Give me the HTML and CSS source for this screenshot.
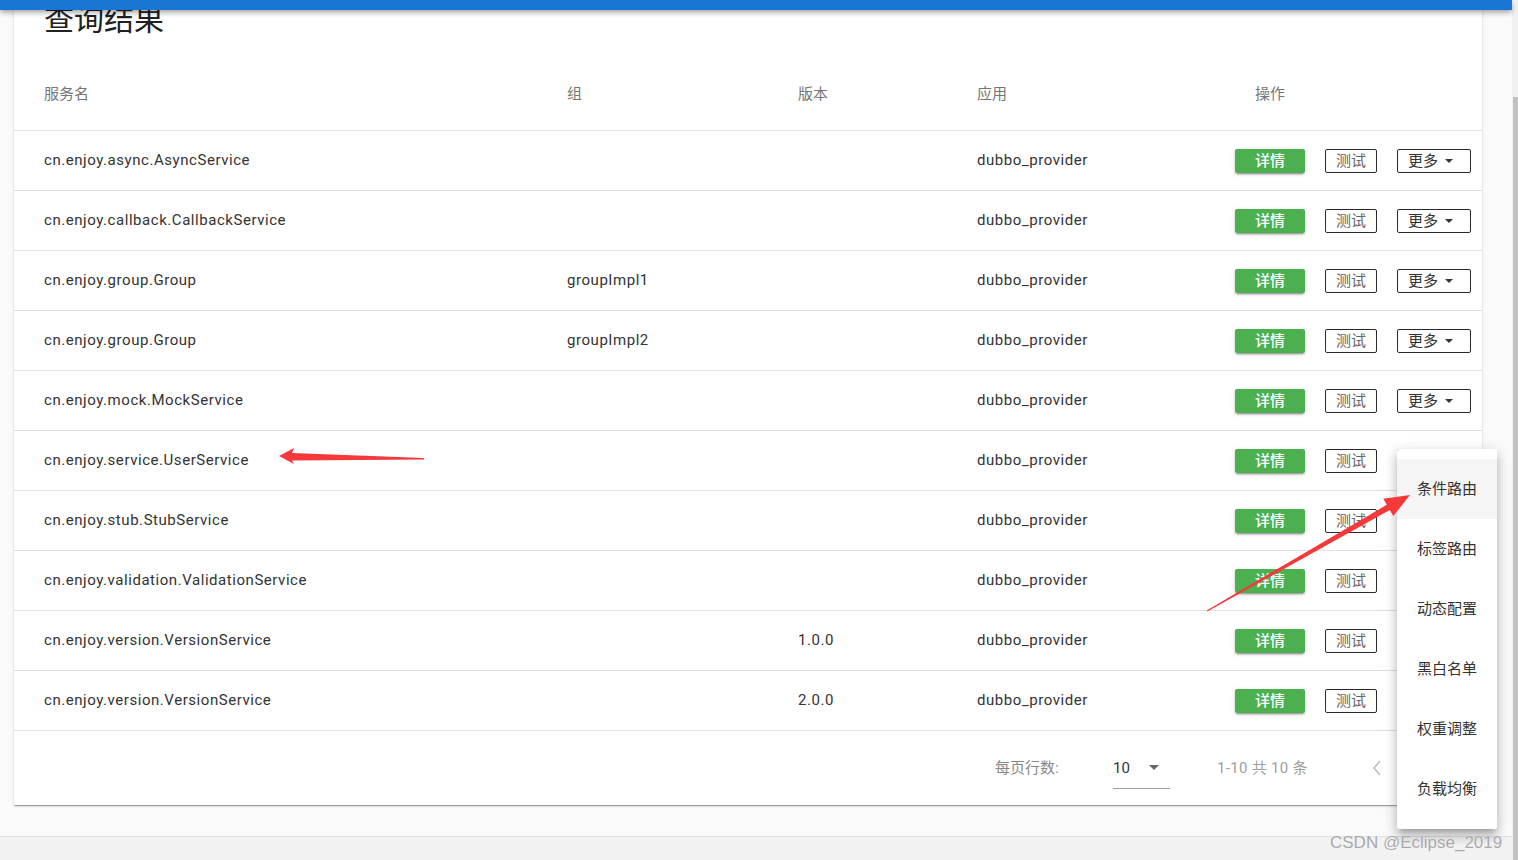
FILE: index.html
```html
<!DOCTYPE html>
<html lang="zh-CN">
<head>
<meta charset="utf-8">
<title>查询结果</title>
<link rel="stylesheet" href="styles.css">
</head>
<body>
<header class="appbar"></header>
<div class="layout">
  <main class="content">
    <section class="card">
      <h2 class="title">查询结果</h2>
      <div class="table">
        <div class="row head">
          <div class="cell">服务名</div>
          <div class="cell">组</div>
          <div class="cell">版本</div>
          <div class="cell">应用</div>
          <div class="cell ops-head">操作</div>
        </div>
        <div class="row">
          <div class="cell">cn.enjoy.async.AsyncService</div><div class="cell"></div><div class="cell"></div><div class="cell">dubbo_provider</div>
          <div class="cell ops"><button class="btn-detail">详情</button><button class="btn-test">测试</button><button class="btn-more">更多<span class="caret"></span></button></div>
        </div>
        <div class="row">
          <div class="cell">cn.enjoy.callback.CallbackService</div><div class="cell"></div><div class="cell"></div><div class="cell">dubbo_provider</div>
          <div class="cell ops"><button class="btn-detail">详情</button><button class="btn-test">测试</button><button class="btn-more">更多<span class="caret"></span></button></div>
        </div>
        <div class="row">
          <div class="cell">cn.enjoy.group.Group</div><div class="cell">groupImpl1</div><div class="cell"></div><div class="cell">dubbo_provider</div>
          <div class="cell ops"><button class="btn-detail">详情</button><button class="btn-test">测试</button><button class="btn-more">更多<span class="caret"></span></button></div>
        </div>
        <div class="row">
          <div class="cell">cn.enjoy.group.Group</div><div class="cell">groupImpl2</div><div class="cell"></div><div class="cell">dubbo_provider</div>
          <div class="cell ops"><button class="btn-detail">详情</button><button class="btn-test">测试</button><button class="btn-more">更多<span class="caret"></span></button></div>
        </div>
        <div class="row">
          <div class="cell">cn.enjoy.mock.MockService</div><div class="cell"></div><div class="cell"></div><div class="cell">dubbo_provider</div>
          <div class="cell ops"><button class="btn-detail">详情</button><button class="btn-test">测试</button><button class="btn-more">更多<span class="caret"></span></button></div>
        </div>
        <div class="row">
          <div class="cell">cn.enjoy.service.UserService</div><div class="cell"></div><div class="cell"></div><div class="cell">dubbo_provider</div>
          <div class="cell ops"><button class="btn-detail">详情</button><button class="btn-test">测试</button><button class="btn-more">更多<span class="caret"></span></button></div>
        </div>
        <div class="row">
          <div class="cell">cn.enjoy.stub.StubService</div><div class="cell"></div><div class="cell"></div><div class="cell">dubbo_provider</div>
          <div class="cell ops"><button class="btn-detail">详情</button><button class="btn-test">测试</button><button class="btn-more">更多<span class="caret"></span></button></div>
        </div>
        <div class="row">
          <div class="cell">cn.enjoy.validation.ValidationService</div><div class="cell"></div><div class="cell"></div><div class="cell">dubbo_provider</div>
          <div class="cell ops"><button class="btn-detail">详情</button><button class="btn-test">测试</button><button class="btn-more">更多<span class="caret"></span></button></div>
        </div>
        <div class="row">
          <div class="cell">cn.enjoy.version.VersionService</div><div class="cell"></div><div class="cell">1.0.0</div><div class="cell">dubbo_provider</div>
          <div class="cell ops"><button class="btn-detail">详情</button><button class="btn-test">测试</button><button class="btn-more">更多<span class="caret"></span></button></div>
        </div>
        <div class="row">
          <div class="cell">cn.enjoy.version.VersionService</div><div class="cell"></div><div class="cell">2.0.0</div><div class="cell">dubbo_provider</div>
          <div class="cell ops"><button class="btn-detail">详情</button><button class="btn-test">测试</button><button class="btn-more">更多<span class="caret"></span></button></div>
        </div>
      </div>
      <div class="footer">
        <span class="per-page">每页行数:</span>
        <div class="select"><span>10</span><span class="select-caret"></span></div>
        <span class="range">1-10 共 10 条</span>
        <svg class="chev" width="10" height="16" viewBox="0 0 10 16"><path d="M8 1 L2 8 L8 15" fill="none" stroke="#bdbdbd" stroke-width="1.6"/></svg>
      </div>
    </section>
    <div class="page-footer"></div>
  </main>
  <div class="scrollbar"><div class="thumb"></div></div>
</div>

<ul class="menu">
  <li class="active">条件路由</li>
  <li>标签路由</li>
  <li>动态配置</li>
  <li>黑白名单</li>
  <li>权重调整</li>
  <li>负载均衡</li>
</ul>

<svg class="arrows" width="1518" height="860" viewBox="0 0 1518 860">
  <polygon fill="#f5393b" points="279,456 294,448 292,453 424,458 424,459.5 292,460.5 294,464"/>
  <polygon fill="#f5393b" points="1410,495 1393.3,516.1 1389.8,510 1207.3,611.6 1206.7,610.4 1386.8,504.8 1383.3,498.7"/>
</svg>

<span class="watermark">CSDN @Eclipse_2019</span>
</body>
</html>
```

FILE: styles.css
```css
html, body {
  margin: 0;
  padding: 0;
  height: 860px;
  overflow: hidden;
  background: #fafafa;
  font-family: Roboto, "Noto Sans CJK SC", sans-serif;
  color: #333;
}

.appbar {
  position: fixed;
  top: 0;
  left: 0;
  width: 1512px;
  height: 10px;
  background: #1976d2;
  box-shadow: 0 2px 4px -1px rgba(0,0,0,.2), 0 4px 5px 0 rgba(0,0,0,.14), 0 1px 10px 0 rgba(0,0,0,.12);
  z-index: 5;
}

.layout {
  display: flex;
  height: 860px;
}

.content {
  flex: 1;
  display: flex;
  flex-direction: column;
}

.scrollbar {
  width: 6px;
  background: #f1f1f1;
  display: flex;
  flex-direction: column;
}

.thumb {
  margin-top: 97px;
  flex: 1;
  background: #c1c1c1;
  margin-left: 1px;
}

.card {
  margin: 0 30px 0 14px;
  background: #fff;
  box-shadow: 0 2px 1px -1px rgba(0,0,0,.2), 0 1px 1px 0 rgba(0,0,0,.14), 0 1px 3px 0 rgba(0,0,0,.12);
}

.title {
  margin: 0;
  padding: 5px 30px 0;
  font-size: 30px;
  line-height: 30px;
  font-weight: 400;
  color: #212121;
}

.table {
  margin-top: 25px;
}

.row {
  display: grid;
  grid-template-columns: 523px 231px 179px 258px 1fr;
  padding-left: 30px;
  align-items: center;
  height: 60px;
  box-sizing: border-box;
  border-bottom: 1px solid #e0e0e0;
  font-size: 15px;
  letter-spacing: 0.55px;
}

.row > .cell:not(.ops) {
  margin-bottom: 2px;
}

.row.head {
  height: 71px;
  color: #757575;
  font-size: 15px;
  letter-spacing: 0;
  padding-bottom: 3px;
}

.ops-head {
  padding-left: 20px;
}

.ops {
  display: flex;
  align-items: center;
  gap: 20px;
  letter-spacing: 0;
}

button {
  font-family: Roboto, "Noto Sans CJK SC", sans-serif;
  font-size: 15px;
  height: 24px;
  padding: 0;
  border-radius: 2px;
  cursor: pointer;
  line-height: 22px;
}

.btn-detail {
  width: 70px;
  background: #4caf50;
  color: #fff;
  border: none;
  font-weight: 500;
  line-height: 24px;
  box-shadow: 0 3px 1px -2px rgba(0,0,0,.2), 0 2px 2px 0 rgba(0,0,0,.14), 0 1px 5px 0 rgba(0,0,0,.12);
}

.btn-test {
  width: 52px;
  background: #fff;
  border: 1px solid #2a2a2a;
  color: #666;
}

.btn-more {
  width: 74px;
  background: #fff;
  border: 1px solid #2a2a2a;
  color: #333;
  display: flex;
  align-items: center;
  padding-left: 10px;
  gap: 7px;
}

.caret {
  width: 0;
  height: 0;
  border-left: 4px solid transparent;
  border-right: 4px solid transparent;
  border-top: 4px solid #333;
}

.footer {
  height: 74px;
  display: flex;
  align-items: center;
  padding-left: 981px;
  font-size: 15px;
  color: #888;
}

.per-page {
  width: 118px;
  margin-bottom: 3px;
}

.select {
  width: 57px;
  height: 42px;
  box-sizing: border-box;
  border-bottom: 1px solid #9e9e9e;
  display: flex;
  align-items: center;
  color: #333;
  gap: 19px;
  margin-right: 47px;
}

.select-caret {
  width: 0;
  height: 0;
  border-left: 5px solid transparent;
  border-right: 5px solid transparent;
  border-top: 5px solid #666;
}

.range {
  width: 155px;
  color: #9e9e9e;
  letter-spacing: 0.3px;
  margin-bottom: 3px;
}

.page-footer {
  margin-top: 31px;
  flex: 1;
  border-top: 1px solid #e0e0e0;
  background: #f2f2f2;
}

.menu {
  position: absolute;
  left: 1397px;
  top: 449px;
  width: 100px;
  margin: 0;
  padding: 10px 0;
  list-style: none;
  background: #fff;
  border-radius: 2px;
  box-shadow: 0 5px 5px -3px rgba(0,0,0,.2), 0 8px 10px 1px rgba(0,0,0,.14), 0 3px 14px 2px rgba(0,0,0,.12);
  z-index: 3;
}

.menu li {
  height: 60px;
  line-height: 60px;
  padding-left: 20px;
  font-size: 15px;
  color: #333;
}

.menu li.active {
  background: #f5f5f5;
}

.arrows {
  position: absolute;
  left: 0;
  top: 0;
  pointer-events: none;
  z-index: 4;
}

.watermark {
  position: absolute;
  left: 1330px;
  top: 833px;
  font-family: "Liberation Sans", Arial, sans-serif;
  font-size: 17px;
  color: #a8a8a8;
  text-shadow: 0 0 1px #fff;
  z-index: 6;
}
```
